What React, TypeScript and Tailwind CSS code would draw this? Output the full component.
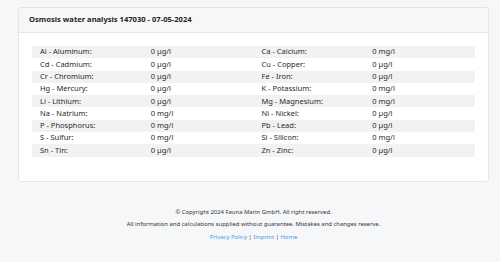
import React from "react";

const rows: [string, string, string, string][] = [
  ["Al - Aluminum:", "0 µg/l", "Ca - Calcium:", "0 mg/l"],
  ["Cd - Cadmium:", "0 µg/l", "Cu - Copper:", "0 µg/l"],
  ["Cr - Chromium:", "0 µg/l", "Fe - Iron:", "0 µg/l"],
  ["Hg - Mercury:", "0 µg/l", "K - Potassium:", "0 mg/l"],
  ["Li - Lithium:", "0 µg/l", "Mg - Magnesium:", "0 mg/l"],
  ["Na - Natrium:", "0 mg/l", "Ni - Nickel:", "0 µg/l"],
  ["P - Phosphorus:", "0 mg/l", "Pb - Lead:", "0 µg/l"],
  ["S - Sulfur:", "0 mg/l", "Si - Silicon:", "0 mg/l"],
  ["Sn - Tin:", "0 µg/l", "Zn - Zinc:", "0 µg/l"],
];

export default function App() {
  return (
    <div
      className="min-h-[262px] bg-[#f6f7f9] pt-[7px] text-[#212529]"
      style={{ fontFamily: '"Noto Sans", "Open Sans", sans-serif' }}
    >
      <div className="ml-[18px] w-[471px]">
        <div className="rounded-[3px] border border-[#e3e5e8] bg-white">
          <div className="flex h-[25px] items-center border-b border-[#e3e5e8] bg-[#f7f7f8] px-[10px] text-[7.6px] font-bold">
            Osmosis water analysis 147030 - 07-05-2024
          </div>
          <div className="px-[13px] pt-[13px] pb-[24px]">
            <div className="text-[7.5px] text-[#2a2a2a]">
              {rows.map((r, i) => (
                <div
                  key={i}
                  className={`grid h-[12.3px] grid-cols-4 items-center ${i % 2 === 0 ? "bg-[#f2f2f3]" : ""}`}
                >
                  {r.map((c, j) => (
                    <div key={j} className="pl-[8px] leading-none">
                      {c}
                    </div>
                  ))}
                </div>
              ))}
            </div>
          </div>
        </div>
        <div className="mt-[24px] flex flex-col items-center text-[5.9px] leading-[12.5px] text-[#333]">
          <div>© Copyright 2024 Fauna Marin GmbH. All right reserved.</div>
          <div>All information and calculations supplied without guarantee. Mistakes and changes reserve.</div>
          <div>
            <a className="text-[#3d9be9]">Privacy Policy</a> | <a className="text-[#3d9be9]">Imprint</a> |{" "}
            <a className="text-[#3d9be9]">Home</a>
          </div>
        </div>
      </div>
    </div>
  );
}
